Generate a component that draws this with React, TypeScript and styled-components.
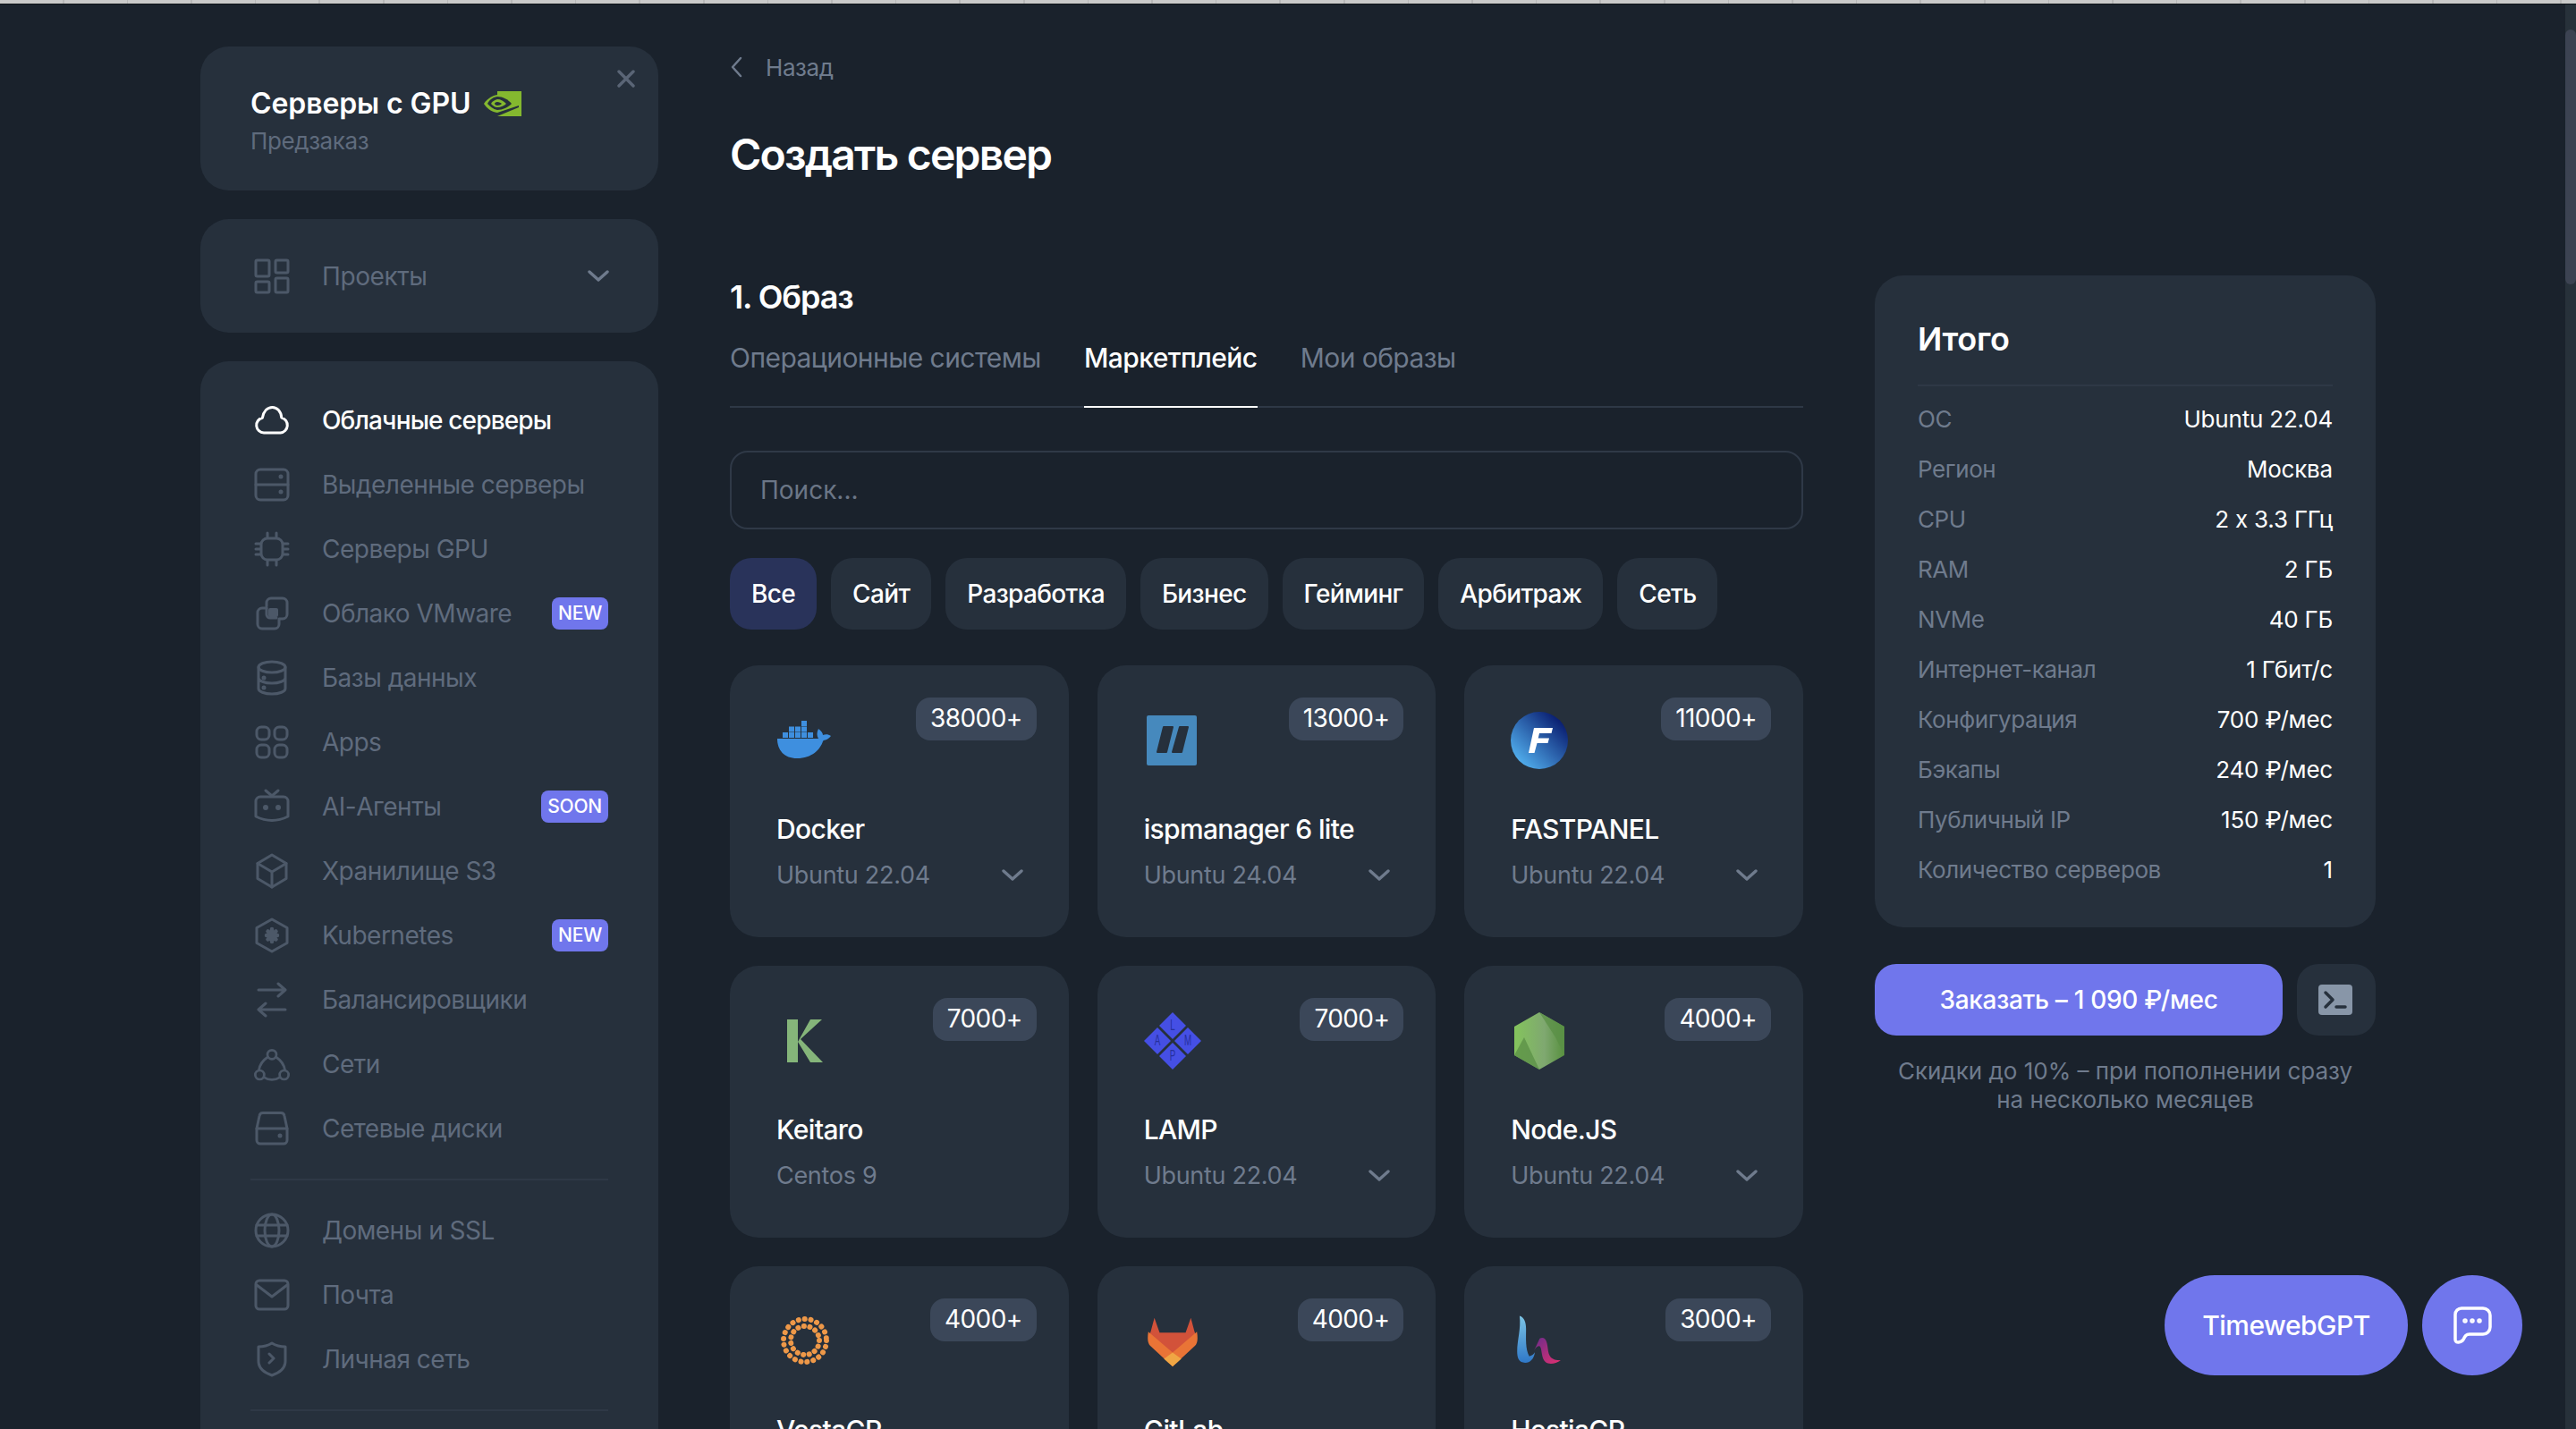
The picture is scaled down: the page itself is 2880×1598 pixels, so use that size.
import React from 'react'
import styled, { createGlobalStyle } from 'styled-components'

const GlobalStyle = createGlobalStyle`
  html, body {
    margin: 0;
    padding: 0;
    height: 1598px;
    overflow: hidden;
    background: #1a222c;
    font-family: Inter, "Noto Sans", sans-serif;
    color: #fff;
  }
  * { box-sizing: border-box; }
`

const TopStrip = styled.div`
  height: 5px;
  border-bottom: 1px solid #0f1419;
  background: repeating-linear-gradient(90deg, #cacaca 0, #cacaca 70px, #b8b8b8 70px, #b8b8b8 71.6px);
`

const Page = styled.div`
  display: flex;
  height: 1593px;
  padding-left: 224px;
  gap: 80px;
  overflow: hidden;
`

const Sidebar = styled.aside`
  width: 512px;
  flex: none;
  display: flex;
  flex-direction: column;
  gap: 32px;
  padding-top: 47px;
`

const Panel = styled.div`
  background: #26303c;
  border-radius: 32px;
`

const PromoCard = styled(Panel)`
  position: relative;
  height: 162px;
  padding: 44px 56px 0;
`

const PromoTitle = styled.div`
  display: flex;
  align-items: center;
  gap: 15px;
  font-size: 32px;
  line-height: 40px;
  font-weight: 600;
  letter-spacing: -0.1px;
`

const PromoSub = styled.div`
  margin-top: 2px;
  font-size: 26px;
  line-height: 40px;
  letter-spacing: -0.4px;
  color: #5f6b7d;
`

const CloseBtn = styled.span`
  position: absolute;
  top: 26px;
  right: 26px;
  display: flex;
  color: #5a6576;
`

const ProjectsCard = styled(Panel)`
  height: 128px;
  padding: 0 56px 0 60px;
  display: flex;
  align-items: center;
  gap: 36px;
  color: #5f6b7d;
  font-size: 28px;
  letter-spacing: -0.4px;
`

const Grow = styled.span`
  flex: 1;
`

const NavPanel = styled(Panel)`
  flex: 1;
  padding: 30px 56px 0 60px;
  border-radius: 32px 32px 0 0;
`

const NavRow = styled.div<{ $active?: boolean }>`
  height: 72px;
  display: flex;
  align-items: center;
  gap: 36px;
  font-size: 28px;
  letter-spacing: ${({ $active }) => ($active ? '-0.85px' : '-0.5px')};
  color: ${({ $active }) => ($active ? '#ffffff' : '#5f6b7d')};
  font-weight: ${({ $active }) => ($active ? 500 : 400)};
`

const NavIcon = styled.span<{ $active?: boolean }>`
  width: 40px;
  height: 40px;
  flex: none;
  display: flex;
  color: ${({ $active }) => ($active ? '#ffffff' : '#4c5868')};
`

const NavBadge = styled.span`
  height: 36px;
  padding: 0 7px;
  border-radius: 8px;
  background: #7076ec;
  color: #fff;
  font-size: 21px;
  font-weight: 500;
  letter-spacing: -0.2px;
  line-height: 35px;
`

const NavDivider = styled.div`
  height: 2px;
  margin: 20px 0 20px -4px;
  background: #2e3846;
`

const Main = styled.main`
  width: 1200px;
  flex: none;
  padding-top: 50px;
`

const BackLink = styled.div`
  display: flex;
  align-items: center;
  gap: 24px;
  height: 40px;
  font-size: 26px;
  letter-spacing: -0.4px;
  color: #6f7b8d;
`

const PageTitle = styled.h1`
  margin: 48px 0 0;
  font-size: 48px;
  line-height: 60px;
  font-weight: 600;
  letter-spacing: -1.8px;
`

const SectionTitle = styled.h2`
  margin: 106px 0 0;
  font-size: 36px;
  line-height: 46px;
  font-weight: 600;
  letter-spacing: -1.1px;
`

const Tabs = styled.div`
  display: flex;
  gap: 48px;
  height: 101px;
  border-bottom: 2px solid #2e3846;
`

const Tab = styled.div<{ $active?: boolean }>`
  height: 101px;
  padding-top: 25px;
  font-size: 30px;
  line-height: 40px;
  letter-spacing: -0.55px;
  color: ${({ $active }) => ($active ? '#ffffff' : '#6f7b8d')};
  font-weight: ${({ $active }) => ($active ? 500 : 400)};
  border-bottom: 2px solid ${({ $active }) => ($active ? '#ffffff' : 'transparent')};
`

const SearchBox = styled.div`
  height: 88px;
  margin-top: 48px;
  padding-left: 32px;
  display: flex;
  align-items: center;
  border: 2px solid #2f3947;
  border-radius: 20px;
  font-size: 28px;
  color: #6b7686;
`

const Chips = styled.div`
  display: flex;
  gap: 16px;
  margin-top: 32px;
`

const Chip = styled.div<{ $active?: boolean }>`
  height: 80px;
  padding: 0 24px;
  display: flex;
  align-items: center;
  border-radius: 24px;
  background: ${({ $active }) => ($active ? '#29335a' : '#26303c')};
  font-size: 28px;
  font-weight: 500;
  letter-spacing: -0.65px;
`

const CardGrid = styled.div`
  display: grid;
  grid-template-columns: repeat(3, 1fr);
  gap: 32px;
  margin-top: 40px;
`

const Card = styled.div`
  position: relative;
  height: 304px;
  padding: 52px 52px 0;
  background: #26303c;
  border-radius: 32px;
`

const CountBadge = styled.span`
  position: absolute;
  top: 36px;
  right: 36px;
  height: 48px;
  padding: 0 16px 2px;
  display: flex;
  align-items: center;
  border-radius: 16px;
  background: #3b4759;
  font-size: 28px;
  letter-spacing: -0.6px;
`

const Logo = styled.div`
  width: 64px;
  height: 64px;
  display: flex;
`

const CardName = styled.div`
  margin-top: 47px;
  font-size: 30px;
  line-height: 40px;
  font-weight: 500;
  letter-spacing: -0.65px;
`

const CardSub = styled.div`
  margin-top: 12px;
  display: flex;
  align-items: center;
  justify-content: space-between;
  font-size: 27px;
  line-height: 40px;
  letter-spacing: -0.3px;
  color: #6f7b8d;
`

const Chevron = styled.span`
  display: flex;
  color: #6f7b8d;
  margin-right: -1px;
`

const Aside = styled.section`
  width: 560px;
  flex: none;
  padding-top: 303px;
`

const Summary = styled(Panel)`
  height: 729px;
  padding: 48px 48px 0;
`

const SummaryTitle = styled.div`
  padding-bottom: 28px;
  border-bottom: 2px solid #2e3846;
  font-size: 36px;
  line-height: 46px;
  font-weight: 600;
  letter-spacing: -0.3px;
`

const SummaryRows = styled.div`
  margin-top: 8px;
`

const SummaryRow = styled.div`
  height: 56px;
  display: flex;
  align-items: center;
  justify-content: space-between;
  font-size: 26px;
  letter-spacing: -0.2px;
`

const SummaryLabel = styled.span`
  color: #6f7b8d;
  letter-spacing: -0.4px;
`

const OrderRow = styled.div`
  display: flex;
  gap: 16px;
  margin-top: 41px;
`

const OrderButton = styled.div`
  flex: 1;
  height: 80px;
  display: flex;
  align-items: center;
  justify-content: center;
  border-radius: 24px;
  background: #7076ec;
  font-size: 28px;
  font-weight: 500;
  letter-spacing: -0.3px;
`

const TerminalButton = styled.div`
  width: 88px;
  height: 80px;
  display: flex;
  align-items: center;
  justify-content: center;
  border-radius: 24px;
  background: #26303c;
`

const Note = styled.p`
  margin: 24px 0 0;
  text-align: center;
  font-size: 26px;
  line-height: 32px;
  color: #6f7b8d;
`

const FloatBar = styled.div`
  position: fixed;
  left: 2420px;
  top: 1426px;
  display: flex;
  gap: 16px;
`

const GptButton = styled.div`
  width: 272px;
  height: 112px;
  display: flex;
  align-items: center;
  justify-content: center;
  border-radius: 56px;
  background: #7076ec;
  font-size: 30px;
  font-weight: 500;
  letter-spacing: -0.5px;
`

const ChatButton = styled.div`
  width: 112px;
  height: 112px;
  display: flex;
  align-items: center;
  justify-content: center;
  border-radius: 50%;
  background: #7076ec;
`

const ScrollTrack = styled.div`
  position: fixed;
  top: 5px;
  right: 0;
  width: 12px;
  height: 1593px;
  padding-top: 28px;
  background: #27313a;
`

const ScrollThumb = styled.div`
  height: 285px;
  border-radius: 6px;
  background: #3c4352;
`

const Svg = ({ children, size = 40, view = 40 }: { children: React.ReactNode; size?: number; view?: number }) => (
  <svg width={size} height={size} viewBox={`0 0 ${view} ${view}`} fill="none" stroke="currentColor" strokeWidth="3" strokeLinecap="round" strokeLinejoin="round">
    {children}
  </svg>
)

const ChevronDown = () => (
  <svg width="24" height="24" viewBox="0 0 24 24" fill="none" stroke="currentColor" strokeWidth="3.4" strokeLinecap="round" strokeLinejoin="round">
    <path d="M2 7l10 9 10-9" />
  </svg>
)

const icons: Record<string, React.ReactNode> = {
  cloud: <Svg><path d="M11 34a8.5 8.5 0 0 1-1.6-16.8C10.700 10 15 5.500 20.500 5.500c5.200 0 9.600 4.200 10.300 11.600A8.600 8.600 0 0 1 29.500 34z" /></Svg>,
  server: (
    <Svg>
      <rect x="2" y="3" width="36" height="34" rx="5" />
      <path d="M2 20h36" />
      <circle cx="30" cy="11" r="1" fill="currentColor" />
      <circle cx="30" cy="28" r="1" fill="currentColor" />
    </Svg>
  ),
  gpu: (
    <Svg>
      <rect x="8" y="8" width="24" height="24" rx="7" />
      <path d="M15 2v5M25 2v5M15 33v5M25 33v5M2 14h5M2 20h5M2 26h5M33 14h5M33 20h5M33 26h5" />
    </Svg>
  ),
  vmware: (
    <Svg>
      <path d="M14 12V8a5 5 0 0 1 5-5h13a5 5 0 0 1 5 5v13a5 5 0 0 1-5 5h-4v6a5 5 0 0 1-5 5H9a5 5 0 0 1-5-5V19a5 5 0 0 1 5-5h5" />
      <path d="M14 14v7a4 4 0 0 0 4 4h7" />
      <rect x="16" y="14" width="11" height="10" rx="2" fill="currentColor" stroke="none" />
    </Svg>
  ),
  db: (
    <Svg>
      <ellipse cx="20" cy="8" rx="15" ry="6" />
      <path d="M5 8v24c0 3.300 6.700 6 15 6s15-2.700 15-6V8M5 20c0 3.300 6.700 6 15 6s15-2.700 15-6" />
      <circle cx="11" cy="20" r="1" fill="currentColor" />
      <circle cx="11" cy="31" r="1" fill="currentColor" />
    </Svg>
  ),
  apps: (
    <Svg>
      <rect x="3" y="3" width="14" height="14" rx="5" />
      <rect x="23" y="3" width="14" height="14" rx="5" />
      <rect x="3" y="23" width="14" height="14" rx="5" />
      <rect x="23" y="23" width="14" height="14" rx="5" />
    </Svg>
  ),
  bot: (
    <Svg>
      <path d="M13 2l7 6 7-6" />
      <path d="M7 9h26a5 5 0 0 1 5 5v17c-6 3-12 4.500-18 4.500S8 34 2 31V14a5 5 0 0 1 5-5z" />
      <circle cx="13" cy="21" r="3" fill="currentColor" stroke="none" />
      <circle cx="27" cy="21" r="3" fill="currentColor" stroke="none" />
    </Svg>
  ),
  box: (
    <Svg>
      <path d="M20 2l16 9.500v17L20 38 4 28.500v-17z" />
      <path d="M4 11.500L20 21l16-9.500M20 21v17" />
    </Svg>
  ),
  kube: (
    <Svg>
      <path d="M20 2l17 9.500v17L20 38 3 28.500v-17z" />
      <path d="M20 13v14M14 20h12M15.500 15.500l9 9M24.500 15.500l-9 9" strokeWidth="4.500" />
    </Svg>
  ),
  balance: (
    <Svg>
      <path d="M5 9h30M27 2l8 7-8 7M35 31H5M13 24l-8 7 8 7" />
    </Svg>
  ),
  network: (
    <Svg view={44} size={44}>
      <circle cx="22" cy="8" r="5.500" />
      <circle cx="7" cy="33" r="5.500" />
      <circle cx="37" cy="33" r="5.500" />
      <path d="M17 11C11 15 7 21 6 27M27 11c6 4 10 10 11 16M12 36c6 4 14 4 20 0" />
    </Svg>
  ),
  disk: (
    <Svg>
      <path d="M10 2.500h20a4 4 0 0 1 4 3.500l3 14v13a4 4 0 0 1-4 4H7a4 4 0 0 1-4-4V20L6 6a4 4 0 0 1 4-3.500z" />
      <path d="M3 20h34" />
      <circle cx="29" cy="28" r="1" fill="currentColor" />
    </Svg>
  ),
  globe: (
    <Svg>
      <circle cx="20" cy="20" r="18" />
      <ellipse cx="20" cy="20" rx="8" ry="18" />
      <path d="M3 14h34M3 26h34" />
    </Svg>
  ),
  mail: (
    <Svg>
      <rect x="2" y="4" width="36" height="32" rx="4" />
      <path d="M3 9l17 13L37 9" />
    </Svg>
  ),
  shield: (
    <Svg>
      <path d="M20 2c4 2.500 9 4 15 4v16c0 8-6 13-15 16C11 35 5 30 5 22V6c6 0 11-1.500 15-4z" />
      <path d="M17 14l5 5-5 5" />
    </Svg>
  ),
  projects: (
    <Svg>
      <rect x="2" y="2" width="15" height="18" rx="1.500" />
      <rect x="24" y="2" width="14" height="14" rx="1.500" />
      <rect x="2" y="26" width="15" height="12" rx="1.500" />
      <rect x="24" y="22" width="14" height="16" rx="1.500" />
    </Svg>
  ),
}

const NvidiaLogo = () => (
  <svg width="42" height="28" viewBox="0 0 42 28">
    <path d="M15 0h27v28H15z" fill="#84b82f" />
    <path d="M0 14C5 6 14 3 22 4c7 1 12 5 15 11L15 24C8 23 3 19 0 14z" fill="#84b82f" />
    <path d="M15 6C9 7 6 10 4 14c3 3 6 6 11 7 6 0 12-3 16-7-4-5-10-8-16-8z" fill="#26303c" />
    <path d="M15 9c-4 1-6 3-7 5 2 2 4 4 7 4 4 0 8-2 10-4-3-3-6-5-10-5z" fill="#84b82f" />
    <path d="M15 12c-2 0-3 1-3 2s2 2 3 2c2 0 4-1 5-2-1-1-3-2-5-2z" fill="#26303c" />
    <path d="M15 24l24-8v2L15 28z" fill="#26303c" />
  </svg>
)

const logos: Record<string, React.ReactNode> = {
  docker: (
    <svg width="64" height="64" viewBox="0 0 64 64">
      <g fill="#3e8fdf">
        <path d="M1 30h51c1 1 1 2 0 3-3 9-12 19-29 19C9 52 1 43 1 30z" />
        <path d="M47 30c-2-3-2-7 0-11 3 2 5 5 5 7 3-1 6-1 9 1-2 3-6 5-10 5z" />
        <rect x="7" y="23" width="6" height="6" />
        <rect x="14" y="23" width="6" height="6" />
        <rect x="21" y="23" width="6" height="6" />
        <rect x="28" y="23" width="6" height="6" />
        <rect x="35" y="23" width="6" height="6" />
        <rect x="14" y="16.500" width="6" height="6" />
        <rect x="21" y="16.500" width="6" height="6" />
        <rect x="28" y="16.500" width="6" height="6" />
        <rect x="28" y="10" width="6" height="6" />
      </g>
    </svg>
  ),
  isp: (
    <svg width="64" height="64" viewBox="0 0 64 64">
      <rect x="3" y="4" width="56" height="56" rx="2" fill="#4689bd" />
      <g fill="#26303c" stroke="#26303c" strokeWidth="2" strokeLinejoin="round">
        <path d="M22 17h10l-7 28H15z" />
        <path d="M40 17h9l-7 28H32z" />
      </g>
    </svg>
  ),
  fast: (
    <svg width="64" height="64" viewBox="0 0 64 64">
      <defs>
        <linearGradient id="fp" x1="0.1" y1="0.9" x2="0.9" y2="0.1">
          <stop offset="0" stopColor="#54b4f2" />
          <stop offset="1" stopColor="#06166a" />
        </linearGradient>
      </defs>
      <circle cx="32" cy="32" r="32" fill="url(#fp)" />
      <path d="M26 18h21l-1.500 6H32l-1.300 5.500H43l-1.500 5.500H29.500l-3 11H20z" fill="#fff" />
    </svg>
  ),
  keitaro: (
    <svg width="64" height="64" viewBox="0 0 64 64">
      <path d="M12 8h12v48H12zM38 8h13L27 30l25 26H38L24 33z" fill="#85b57a" />
    </svg>
  ),
  lamp: (
    <svg width="64" height="64" viewBox="0 0 64 64">
      <g fill="#454fe4">
        <path d="M32 0l15 15-15 15-15-15z" />
        <path d="M15 17l15 15-15 15L0 32z" />
        <path d="M49 17l15 15-15 15-15-15z" />
        <path d="M32 34l15 15-15 15-15-15z" />
      </g>
      <g fill="#26309c" fontFamily="'Liberation Sans', sans-serif" fontSize="14" textAnchor="middle">
        <text transform="translate(32 20) scale(0.7 1.2)">L</text>
        <text transform="translate(15 37) scale(0.7 1.2)">A</text>
        <text transform="translate(49 37) scale(0.7 1.2)">M</text>
        <text transform="translate(32 54) scale(0.7 1.2)">P</text>
      </g>
    </svg>
  ),
  node: (
    <svg width="64" height="64" viewBox="0 0 64 64">
      <defs>
        <linearGradient id="nd" x1="0" y1="0" x2="1" y2="0">
          <stop offset="0" stopColor="#84c45c" />
          <stop offset="0.6" stopColor="#7fa870" />
          <stop offset="1" stopColor="#58903f" />
        </linearGradient>
      </defs>
      <path d="M32 0l28 16v32L32 64 4 48V16z" fill="url(#nd)" />
      <path d="M4 48l11-20 17 36zM60 48L50 28 32 0l28 16z" fill="#5a8f45" opacity="0.75" />
    </svg>
  ),
  vesta: (
    <svg width="64" height="64" viewBox="0 0 64 64" fill="none" stroke="#ee9848" strokeLinecap="round" strokeWidth="6">
      <circle cx="32" cy="31" r="24" strokeDasharray="0.1 6.900" />
      <circle cx="32" cy="31" r="16" strokeDasharray="0.1 6.600" />
    </svg>
  ),
  gitlab: (
    <svg width="64" height="64" viewBox="-1 2 66 66">
      <path d="M11 8l6 17h30l6-17 4 15 3 9-28 32L4 32l3-9z" fill="#d2523a" />
      <path d="M4 24l28 24v16L6 40q-4-4-2-16zM60 24L32 48v16l26-24q4-4 2-16z" fill="#e97436" />
      <path d="M32 48l10 7-10 9-10-9z" fill="#f0a644" />
    </svg>
  ),
  hestia: (
    <svg width="64" height="64" viewBox="-3 -4 71 71">
      <defs>
        <linearGradient id="hb" x1="0" y1="0" x2="0" y2="1">
          <stop offset="0" stopColor="#7cc4e4" />
          <stop offset="1" stopColor="#2f78c8" />
        </linearGradient>
        <linearGradient id="hr" x1="0" y1="0" x2="1" y2="1">
          <stop offset="0" stopColor="#6c2c8c" />
          <stop offset="1" stopColor="#e23070" />
        </linearGradient>
      </defs>
      <path d="M33 28c6-3 9 2 10 12 1 10 4 15 16 15-6 4-14 6-19 2-5-5-4-13-6-18-2-4-6 0-8 4z" fill="url(#hr)" />
      <path d="M8 0c6 2 8 8 8 16 0 12-1 25 4 34 3-1 5-2 7-5-1 8-6 13-12 13-8 0-10-6-10-14C5 30 10 16 8 0z" fill="url(#hb)" />
    </svg>
  ),
}

const navTop = [
  { icon: 'cloud', label: 'Облачные серверы', active: true },
  { icon: 'server', label: 'Выделенные серверы' },
  { icon: 'gpu', label: 'Серверы GPU' },
  { icon: 'vmware', label: 'Облако VMware', badge: 'NEW' },
  { icon: 'db', label: 'Базы данных' },
  { icon: 'apps', label: 'Apps' },
  { icon: 'bot', label: 'AI-Агенты', badge: 'SOON' },
  { icon: 'box', label: 'Хранилище S3' },
  { icon: 'kube', label: 'Kubernetes', badge: 'NEW' },
  { icon: 'balance', label: 'Балансировщики' },
  { icon: 'network', label: 'Сети' },
  { icon: 'disk', label: 'Сетевые диски' },
]

const navBottom = [
  { icon: 'globe', label: 'Домены и SSL' },
  { icon: 'mail', label: 'Почта' },
  { icon: 'shield', label: 'Личная сеть' },
]

const chips = ['Все', 'Сайт', 'Разработка', 'Бизнес', 'Гейминг', 'Арбитраж', 'Сеть']

const cards = [
  { logo: 'docker', name: 'Docker', os: 'Ubuntu 22.04', count: '38000+', more: true },
  { logo: 'isp', name: 'ispmanager 6 lite', os: 'Ubuntu 24.04', count: '13000+', more: true },
  { logo: 'fast', name: 'FASTPANEL', os: 'Ubuntu 22.04', count: '11000+', more: true },
  { logo: 'keitaro', name: 'Keitaro', os: 'Centos 9', count: '7000+', more: false },
  { logo: 'lamp', name: 'LAMP', os: 'Ubuntu 22.04', count: '7000+', more: true },
  { logo: 'node', name: 'Node.JS', os: 'Ubuntu 22.04', count: '4000+', more: true },
  { logo: 'vesta', name: 'VestaCP', os: 'Ubuntu 22.04', count: '4000+', more: true },
  { logo: 'gitlab', name: 'GitLab', os: 'Ubuntu 22.04', count: '4000+', more: true },
  { logo: 'hestia', name: 'HestiaCP', os: 'Ubuntu 22.04', count: '3000+', more: true },
]

const summary = [
  ['ОС', 'Ubuntu 22.04'],
  ['Регион', 'Москва'],
  ['CPU', '2 x 3.3 ГГц'],
  ['RAM', '2 ГБ'],
  ['NVMe', '40 ГБ'],
  ['Интернет-канал', '1 Гбит/с'],
  ['Конфигурация', '700 ₽/мес'],
  ['Бэкапы', '240 ₽/мес'],
  ['Публичный IP', '150 ₽/мес'],
  ['Количество серверов', '1'],
]

type NavItem = { icon: string; label: string; active?: boolean; badge?: string }

const NavLine = ({ item }: { item: NavItem }) => (
  <NavRow $active={item.active}>
    <NavIcon $active={item.active}>{icons[item.icon]}</NavIcon>
    <Grow>{item.label}</Grow>
    {item.badge && <NavBadge>{item.badge}</NavBadge>}
  </NavRow>
)

const App = () => {
  return (
    <>
      <GlobalStyle />
      <TopStrip />
      <Page>
        <Sidebar>
          <PromoCard>
            <PromoTitle>
              Серверы с GPU <NvidiaLogo />
            </PromoTitle>
            <PromoSub>Предзаказ</PromoSub>
            <CloseBtn>
              <svg width="20" height="20" viewBox="0 0 20 20" fill="none" stroke="currentColor" strokeWidth="3.400" strokeLinecap="round">
                <path d="M2 2l16 16M18 2L2 18" />
              </svg>
            </CloseBtn>
          </PromoCard>
          <ProjectsCard>
            <NavIcon>{icons.projects}</NavIcon>
            <Grow>Проекты</Grow>
            <Chevron>
              <ChevronDown />
            </Chevron>
          </ProjectsCard>
          <NavPanel>
            {navTop.map((item) => (
              <NavLine key={item.label} item={item} />
            ))}
            <NavDivider />
            {navBottom.map((item) => (
              <NavLine key={item.label} item={item} />
            ))}
            <NavDivider />
          </NavPanel>
        </Sidebar>

        <Main>
          <BackLink>
            <svg width="16" height="24" viewBox="0 0 16 24" fill="none" stroke="currentColor" strokeWidth="2.500" strokeLinecap="round" strokeLinejoin="round">
              <path d="M12 2L3 12l9 10" />
            </svg>
            Назад
          </BackLink>
          <PageTitle>Создать сервер</PageTitle>
          <SectionTitle>1. Образ</SectionTitle>
          <Tabs>
            <Tab>Операционные системы</Tab>
            <Tab $active>Маркетплейс</Tab>
            <Tab>Мои образы</Tab>
          </Tabs>
          <SearchBox>Поиск...</SearchBox>
          <Chips>
            {chips.map((chip, i) => (
              <Chip key={chip} $active={i === 0}>
                {chip}
              </Chip>
            ))}
          </Chips>
          <CardGrid>
            {cards.map((card) => (
              <Card key={card.name}>
                <CountBadge>{card.count}</CountBadge>
                <Logo>{logos[card.logo]}</Logo>
                <CardName>{card.name}</CardName>
                <CardSub>
                  {card.os}
                  {card.more && (
                    <Chevron>
                      <ChevronDown />
                    </Chevron>
                  )}
                </CardSub>
              </Card>
            ))}
          </CardGrid>
        </Main>

        <Aside>
          <Summary>
            <SummaryTitle>Итого</SummaryTitle>
            <SummaryRows>
              {summary.map(([label, value]) => (
                <SummaryRow key={label}>
                  <SummaryLabel>{label}</SummaryLabel>
                  <span>{value}</span>
                </SummaryRow>
              ))}
            </SummaryRows>
          </Summary>
          <OrderRow>
            <OrderButton>Заказать – 1 090 ₽/мес</OrderButton>
            <TerminalButton>
              <svg width="40" height="34" viewBox="0 0 40 34">
                <rect width="38" height="34" rx="4" fill="#8896a8" />
                <path d="M8 9l8 8-8 8" fill="none" stroke="#26303c" strokeWidth="3.500" strokeLinecap="round" strokeLinejoin="round" />
                <path d="M20 25h10" stroke="#26303c" strokeWidth="3.500" strokeLinecap="round" />
              </svg>
            </TerminalButton>
          </OrderRow>
          <Note>
            Скидки до 10% – при пополнении сразу
            <br />
            на несколько месяцев
          </Note>
        </Aside>
      </Page>

      <FloatBar>
        <GptButton>TimewebGPT</GptButton>
        <ChatButton>
          <svg width="44" height="44" viewBox="0 0 44 44" fill="none" stroke="#fff" strokeWidth="3.500" strokeLinecap="round" strokeLinejoin="round">
            <path d="M10 3h24a8 8 0 0 1 8 8v13a8 8 0 0 1-8 8H19c-4 0-5 2-7 6-2 3-9 5-9 0V10a7 7 0 0 1 7-7z" />
            <circle cx="14" cy="17" r="1" fill="#fff" />
            <circle cx="22" cy="17" r="1" fill="#fff" />
            <circle cx="30" cy="17" r="1" fill="#fff" />
          </svg>
        </ChatButton>
      </FloatBar>

      <ScrollTrack>
        <ScrollThumb />
      </ScrollTrack>
    </>
  )
}

export default App
